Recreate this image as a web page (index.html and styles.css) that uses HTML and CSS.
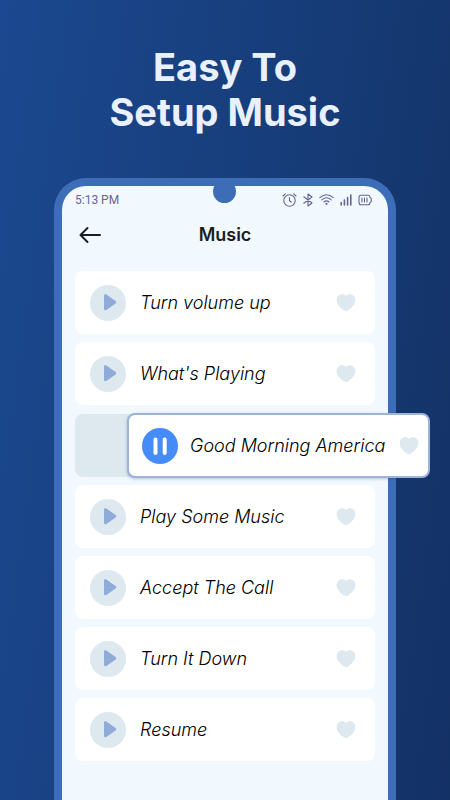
FILE: index.html
```html
<!DOCTYPE html>
<html lang="en">
<head>
<meta charset="utf-8">
<meta name="viewport" content="width=device-width, initial-scale=1">
<title>Easy To Setup Music</title>
<link rel="stylesheet" href="styles.css">
</head>
<body>
<svg class="defs" aria-hidden="true">
  <symbol id="play" viewBox="0 0 36 36"><path d="M15.500 10.700v13L24.700 17.200z" fill="currentColor" stroke="currentColor" stroke-width="3" stroke-linejoin="round"/></symbol>
  <symbol id="pause" viewBox="0 0 36 36"><path d="M13.500 11.500v13.500M22.700 11.500v13.500" fill="none" stroke="currentColor" stroke-width="4" stroke-linecap="round"/></symbol>
  <symbol id="heart" viewBox="0 0 20 18"><path d="M10 2C7.800-.3 4.600-.1 2.600 1.600.2 3.700.2 7.400 1.600 9.900c1.600 2.900 4.500 5.200 7.200 6.800.8.400 1.600.4 2.400 0 2.700-1.600 5.600-3.900 7.200-6.800C19.800 7.400 19.800 3.700 17.400 1.600 15.400-.1 12.200-.3 10 2z" fill="currentColor"/></symbol>
</svg>
<main class="page">
  <h1 class="headline">Easy To<br>Setup Music</h1>
  <section class="phone">
    <span class="camera"></span>
    <div class="status">
      <span>5:13 PM</span>
      <div class="status-icons">
        <svg width="15" height="14" viewBox="0 0 15 14"><circle cx="7.500" cy="7.500" r="5.700"/><path d="M7.500 4.500v3.200l1.800 1.300M1 3l2.300-2.200M14 3 11.700.8"/></svg>
        <svg width="10" height="14" viewBox="0 0 10 14"><path d="M.8 3.800 9 10 5 13V1l4 3-8.200 6.200"/></svg>
        <svg width="15" height="14" viewBox="0 0 15 14"><path d="M.8 4.700q6.700-6 13.400 0M2.800 6.900q4.700-4.200 9.400 0M4.900 9q2.600-2.200 5.200 0"/><circle cx="7.500" cy="10.800" r=".6"/></svg>
        <svg class="signal" width="12" height="14" viewBox="0 0 12 14"><path d="M1.200 9.500V12M4.400 7v5M7.600 4.500V12M10.800 2v10"/></svg>
        <svg width="14" height="14" viewBox="0 0 14 14"><path d="M3 2.300h7q2 0 2 2l1.200 1v3.400l-1.200 1q0 2-2 2H3q-2 0-2-2V4.300q0-2 2-2zM4 5v4M6.500 5v4M9 5v4"/></svg>
      </div>
    </div>
    <header class="bar">
      <button class="back" aria-label="Back"><svg width="22" height="18" viewBox="0 0 22 18"><path d="M21 9H1.500M8.500 2 1.500 9 8.500 16"/></svg></button>
      <h2>Music</h2>
    </header>
    <ul class="songs">
      <li class="song"><button class="toggle" aria-label="Play"><svg><use href="#play"/></svg></button><span class="name">Turn volume up</span><button class="like" aria-label="Like"><svg><use href="#heart"/></svg></button></li>
      <li class="song"><button class="toggle" aria-label="Play"><svg><use href="#play"/></svg></button><span class="name">What's Playing</span><button class="like" aria-label="Like"><svg><use href="#heart"/></svg></button></li>
      <li class="slot">
        <div class="song active"><button class="toggle" aria-label="Pause"><svg><use href="#pause"/></svg></button><span class="name">Good Morning America</span><button class="like" aria-label="Like"><svg><use href="#heart"/></svg></button></div>
      </li>
      <li class="song"><button class="toggle" aria-label="Play"><svg><use href="#play"/></svg></button><span class="name">Play Some Music</span><button class="like" aria-label="Like"><svg><use href="#heart"/></svg></button></li>
      <li class="song"><button class="toggle" aria-label="Play"><svg><use href="#play"/></svg></button><span class="name">Accept The Call</span><button class="like" aria-label="Like"><svg><use href="#heart"/></svg></button></li>
      <li class="song"><button class="toggle" aria-label="Play"><svg><use href="#play"/></svg></button><span class="name">Turn It Down</span><button class="like" aria-label="Like"><svg><use href="#heart"/></svg></button></li>
      <li class="song"><button class="toggle" aria-label="Play"><svg><use href="#play"/></svg></button><span class="name">Resume</span><button class="like" aria-label="Like"><svg><use href="#heart"/></svg></button></li>
    </ul>
  </section>
</main>
</body>
</html>
```
FILE: styles.css
```css
* {
  box-sizing: border-box;
}

body {
  margin: 0;
  font-family: Inter, "Liberation Sans", sans-serif;
  background: #153267;
}

button {
  padding: 0;
  border: 0;
  background: none;
  cursor: pointer;
}

svg {
  display: block;
}

.defs {
  position: absolute;
  width: 0;
  height: 0;
}

.page {
  display: flex;
  flex-direction: column;
  min-height: 100vh;
  padding: 45px 54px 0;
  background: linear-gradient(98deg, #1b4890 0%, #173e7b 50%, #133165 100%);
}

.headline {
  margin: 0 0 43px;
  color: #e9f0ff;
  font-size: 38px;
  font-weight: 700;
  line-height: 45px;
  text-align: center;
}

.phone {
  position: relative;
  flex: 1;
  padding: 0 13px 30px;
  border: 8px solid #3e6db8;
  border-bottom: 0;
  border-radius: 32px 32px 0 0;
  background: #f1f9ff;
}

.camera {
  position: absolute;
  top: -6px;
  left: 50%;
  width: 23px;
  height: 23px;
  margin-left: -12px;
  border-radius: 50%;
  background: #3e6db8;
}

.status {
  display: flex;
  align-items: center;
  justify-content: space-between;
  padding-top: 6px;
  color: #66668f;
  font-family: Roboto, sans-serif;
  font-size: 12px;
  line-height: 16px;
}

.status-icons {
  display: flex;
  gap: 6px;
  padding-right: 3px;
}

.status-icons svg {
  fill: none;
  stroke: currentColor;
  stroke-width: 1.1;
  stroke-linejoin: round;
  stroke-linecap: round;
}

.status-icons .signal {
  stroke-width: 1.6;
}

.bar {
  display: grid;
  grid-template-columns: 26px 1fr 26px;
  align-items: center;
  margin: 15px 0 24px;
}

.bar h2 {
  margin: 0;
  color: #1b1d22;
  font-size: 18px;
  font-weight: 600;
  line-height: 24px;
  text-align: center;
}

.back {
  justify-self: end;
}

.back svg {
  fill: none;
  stroke: #1b1d22;
  stroke-width: 2;
  stroke-linecap: round;
  stroke-linejoin: round;
}

.songs {
  display: flex;
  flex-direction: column;
  gap: 8px;
  margin: 0;
  padding: 0;
  list-style: none;
}

.song {
  display: flex;
  align-items: center;
  gap: 14px;
  height: 63px;
  padding: 0 19px 0 15px;
  border-radius: 8px;
  background: #fff;
}

.toggle {
  flex: none;
  width: 36px;
  height: 36px;
  border-radius: 50%;
  background: #dde8ef;
  color: #8fabd8;
}

.toggle svg {
  width: 36px;
  height: 36px;
}

.name {
  flex: 1;
  color: #000;
  font-size: 18px;
  font-style: italic;
  font-weight: 300;
  line-height: 24px;
  white-space: nowrap;
}

.like {
  flex: none;
  color: #dde8ef;
}

.like svg {
  width: 20px;
  height: 18px;
}

.slot {
  position: relative;
  height: 63px;
  margin-top: 1px;
  border-radius: 8px;
  background: #dde8ef;
}

.active {
  position: absolute;
  top: -1px;
  left: 52px;
  right: -55px;
  gap: 12px;
  height: 65px;
  padding: 0 9px 0 13px;
  border: 2px solid #9db3da;
  box-shadow: 0 1px 3px #2b498050;
}

.active .toggle {
  background: #468cf9;
  color: #fff;
}
```
